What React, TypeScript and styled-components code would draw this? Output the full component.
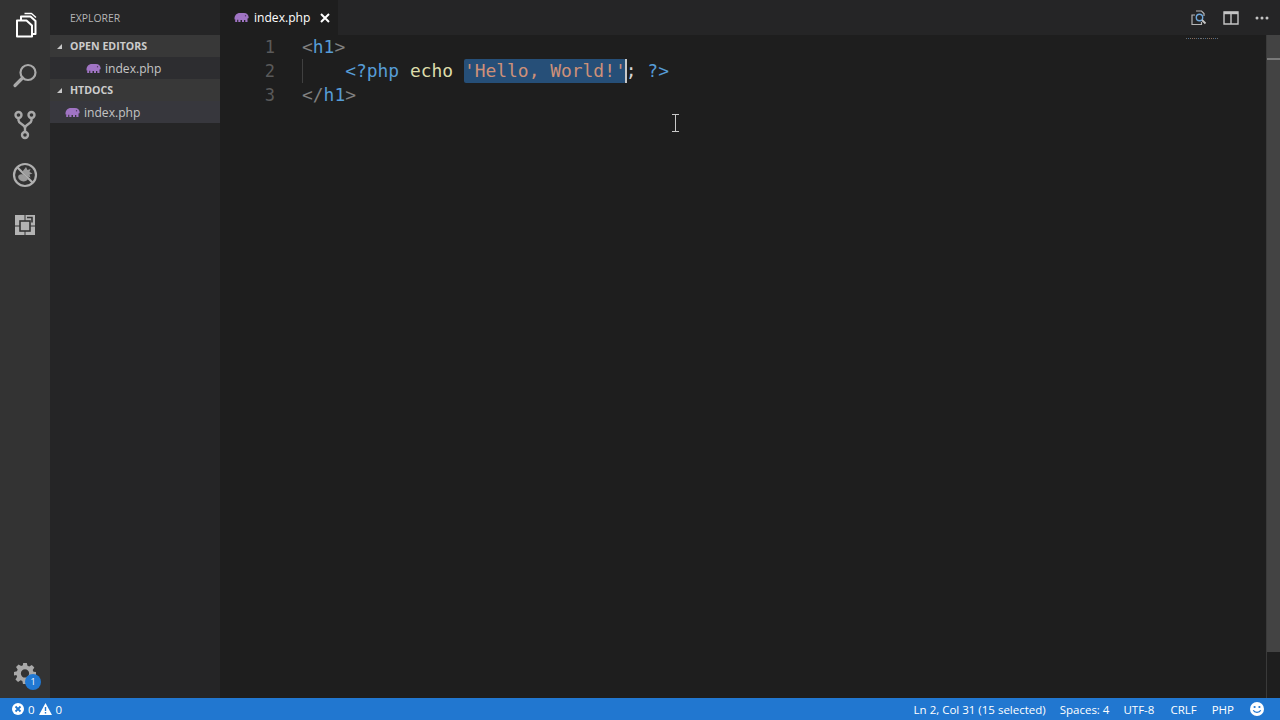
import React from "react";
import styled, { createGlobalStyle } from "styled-components";

const GlobalStyle = createGlobalStyle`
  html, body { margin: 0; padding: 0; background: #1e1e1e; overflow: hidden; }
  * { box-sizing: border-box; }
`;

const Window = styled.div`
  width: 1280px;
  height: 720px;
  display: flex;
  flex-direction: column;
  font-family: "Open Sans", "Noto Sans", sans-serif;
  position: relative;
`;

const Main = styled.div`
  flex: 1;
  display: flex;
  min-height: 0;
`;

const ActivityBar = styled.div`
  width: 50px;
  background: #333333;
  display: flex;
  flex-direction: column;
  align-items: center;
`;

const ActivityItem = styled.div`
  width: 50px;
  height: 50px;
  display: flex;
  align-items: center;
  justify-content: center;
`;

const ActivitySpacer = styled.div`
  flex: 1;
`;

const GearWrap = styled.div`
  width: 50px;
  height: 50px;
  display: flex;
  align-items: center;
  justify-content: center;
  position: relative;
`;

const Badge = styled.div`
  position: absolute;
  left: 25px;
  top: 26px;
  width: 16px;
  height: 16px;
  border-radius: 50%;
  background: #2178d2;
  color: #fff;
  font-size: 9px;
  line-height: 16px;
  text-align: center;
`;

const Sidebar = styled.div`
  width: 170px;
  background: #252526;
  display: flex;
  flex-direction: column;
`;

const SidebarTitle = styled.div`
  height: 35px;
  padding-left: 20px;
  font-size: 10.4px;
  line-height: 37px;
  color: #b5b5b5;
`;

const SectionHeader = styled.div`
  height: 22px;
  background: #383838;
  display: flex;
  align-items: center;
  padding-left: 7px;
  font-size: 10.6px;
  font-weight: 700;
  color: #cccccc;
`;

const Caret = styled.span`
  width: 0;
  height: 0;
  border-style: solid;
  border-width: 0 0 5px 5px;
  border-color: transparent transparent #c8c8c8 transparent;
  margin-right: 8px;
`;

const FileRow = styled.div<{ $indent: number; $active?: boolean }>`
  height: 22px;
  display: flex;
  align-items: center;
  gap: 4px;
  padding-left: ${(p) => p.$indent}px;
  font-size: 12.1px;
  color: #c4c4c4;
  background: ${(p) => (p.$active ? "#37373d" : "#2d2d30")};
`;

const EditorArea = styled.div`
  flex: 1;
  display: flex;
  flex-direction: column;
  min-width: 0;
  background: #1e1e1e;
`;

const TabBar = styled.div`
  height: 35px;
  background: #252526;
  display: flex;
  justify-content: space-between;
  align-items: center;
`;

const Tab = styled.div`
  height: 35px;
  width: 118px;
  background: #1e1e1e;
  display: flex;
  align-items: center;
  padding-left: 14px;
  font-size: 12.1px;
  color: #ffffff;
`;

const TabName = styled.span`
  margin-left: 5px;
`;

const TabClose = styled.span`
  margin-left: 10px;
  display: flex;
`;

const TabActions = styled.div`
  display: flex;
  align-items: center;
  gap: 16px;
  padding-right: 11px;
`;

const EditorBody = styled.div`
  flex: 1;
  display: flex;
  min-height: 0;
  position: relative;
`;

const Gutter = styled.div`
  width: 55px;
  text-align: right;
  color: #5a5a5a;
  font-family: "DejaVu Sans Mono", monospace;
  font-size: 17px;
  line-height: 24px;
`;

const Code = styled.div`
  flex: 1;
  margin-left: 27px;
  font-family: "DejaVu Sans Mono", monospace;
  font-size: 17.93px;
  line-height: 24px;
  white-space: pre;
  color: #d4d4d4;
`;

const CodeLine = styled.div`
  height: 24px;
  position: relative;
`;

const IndentGuide = styled.span`
  position: absolute;
  left: 0;
  top: 0;
  width: 1px;
  height: 24px;
  background: #404040;
`;

const Token = styled.span<{ $color: string }>`
  color: ${(p) => p.$color};
`;

const Selection = styled.span`
  background: #264f78;
  color: #ce9178;
  position: relative;
  display: inline-block;
  height: 24px;
  border-radius: 2px;
`;

const Cursor = styled.span`
  position: absolute;
  right: -1px;
  top: 0;
  width: 2px;
  height: 24px;
  background: #c8c8c8;
`;

const Minimap = styled.div`
  position: absolute;
  left: 966px;
  top: 1px;
  width: 32px;
  height: 4px;
  display: flex;
  gap: 1px;
  align-items: center;
`;

const MinimapDot = styled.span<{ $color: string }>`
  width: 2px;
  height: 1px;
  background: ${(p) => p.$color};
`;

const ScrollTrack = styled.div`
  width: 14px;
  border-left: 1px solid #3a3a3a;
  display: flex;
  flex-direction: column;
`;

const ScrollThumb = styled.div`
  height: 617px;
  background: #434343;
  position: relative;
`;

const ScrollMark = styled.div`
  position: absolute;
  left: 0;
  right: 0;
  top: 23px;
  height: 2px;
  background: #7a7a7a;
`;

const IBeam = styled.svg`
  position: absolute;
  left: 671px;
  top: 114px;
`;

const StatusBar = styled.div`
  height: 22px;
  background: #2177d0;
  display: flex;
  align-items: center;
  justify-content: space-between;
  color: #ffffff;
  font-size: 11.5px;
`;

const StatusGroup = styled.div`
  display: flex;
  align-items: center;
`;

const StatusText = styled.span<{ $gap?: number }>`
  margin-left: ${(p) => p.$gap ?? 0}px;
  display: flex;
`;

const SmileySlot = styled.span`
  display: flex;
  margin-left: 16px;
  margin-right: 16px;
`;

const PhpIcon = () => (
  <svg width="15" height="11" viewBox="0 0 15 11">
    <path
      d="M.5 7.500C.2 3.500 2.500 1 6 1h4c2.800 0 4.700 2 4.700 4.600 0 .8-.7 1-1.200.6V10h-2.200V8H10v2H8V8H6.500v2H4.300V7.800H3.200V10H1.200V7.200C1 7 .7 7.300.5 7.500Z"
      fill="#a074c4"
    />
    <circle cx="11.500" cy="3.800" r=".7" fill="#4f3a63" />
  </svg>
);

const FilesIcon = () => (
  <svg width="24" height="26" viewBox="0 0 24 26" fill="none" stroke="#ffffff" strokeWidth="2" strokeLinejoin="round">
    <path d="M4 8.500h9.500l5.500 5v11H4Z" />
    <path d="M8 8V4.500h9.500l5 4.500v13H19" />
    <path d="M11.500 1.500h7l4.500 4" strokeWidth="1.400" />
  </svg>
);

const SearchIcon = () => (
  <svg width="26" height="26" viewBox="0 0 26 26" fill="none" stroke="#a9a9a9">
    <circle cx="16" cy="10.500" r="7.500" strokeWidth="2.200" />
    <path d="M10.500 16 3 23.500" strokeWidth="3.200" strokeLinecap="round" />
  </svg>
);

const BranchIcon = () => (
  <svg width="22" height="30" viewBox="0 0 22 30" fill="none" stroke="#a9a9a9" strokeWidth="2.400">
    <circle cx="4.500" cy="5" r="3" />
    <circle cx="17.500" cy="5" r="3" />
    <circle cx="11" cy="25" r="3" />
    <path d="M4.500 8v2.500c0 3 6.500 4 6.500 7.500v4M17.500 8v2.500c0 3-6.500 4-6.500 7.500" />
  </svg>
);

const DebugIcon = () => (
  <svg width="26" height="26" viewBox="0 0 26 26" fill="none">
    <circle cx="13" cy="13" r="11" stroke="#b0b0b0" strokeWidth="2.200" />
    <path d="M5 5 21 21" stroke="#b0b0b0" strokeWidth="2.200" />
    <path d="M14 5l1.500 3 3-1-1 3 3 1.500-3 1 1 3-4-1.500-4-4.500Z" fill="#9a9a9a" />
    <path d="M6.500 13.500c2-2 5-1.500 6.500.5l3 3c-1 2-4 3-6.500 2-2.500-1-4-3.500-3-5.500Z" fill="#9a9a9a" />
  </svg>
);

const ExtensionsIcon = () => (
  <svg width="24" height="24" viewBox="0 0 24 24">
    <rect x="2" y="2" width="20" height="20" fill="#b3b3b3" />
    <rect x="7" y="8" width="10" height="10" fill="#b3b3b3" stroke="#333333" strokeWidth="1.600" />
    <path d="M14 4.500h5v5" fill="none" stroke="#333333" strokeWidth="1.600" />
    <path d="M12 2v6M12 18v4M17 13h5M2 13h5" stroke="#333333" strokeWidth="1" />
  </svg>
);

const GearIcon = () => (
  <svg width="22" height="22" viewBox="0 0 24 24">
    <path
      fillRule="evenodd"
      fill="#a9a9a9"
      d="M10 1h4l.7 3.200 1.900.8L19.400 3.200l2.800 2.800-1.800 2.800.8 1.900L24 11v4l-3.200.7-.8 1.900 1.800 2.800-2.800 2.800-2.800-1.800-1.900.8L13.800 24h-4l-.7-3.200-1.900-.8-2.800 1.800-2.800-2.800 1.800-2.800-.8-1.900L0 14.800v-4l3.200-.7.8-1.900L2.200 5.400 5 2.600l2.800 1.800 1.900-.8ZM12 8a4.500 4.500 0 1 0 0 9 4.500 4.500 0 0 0 0-9Z"
    />
  </svg>
);

const CloseIcon = () => (
  <svg width="10" height="10" viewBox="0 0 10 10" stroke="#ffffff" strokeWidth="2">
    <path d="M1 1l8 8M9 1l-8 8" />
  </svg>
);

const CompareIcon = () => (
  <svg width="16" height="16" viewBox="0 0 16 16" fill="none" stroke="#b5b5b5" strokeWidth="1.200">
    <path d="M4 5H1v9.500h9.500V12" />
    <path d="M5 1h5.500L13 3.500V6" />
    <circle cx="8.500" cy="7.500" r="3.200" stroke="#6fa8dc" strokeWidth="1.400" />
    <path d="M11 10l3.500 3.500" stroke="#c5c5c5" strokeWidth="1.800" />
  </svg>
);

const SplitIcon = () => (
  <svg width="16" height="14" viewBox="0 0 16 14" fill="none" stroke="#c5c5c5">
    <path d="M1 1h14v12H1Z" strokeWidth="1.400" />
    <path d="M1 2h14" strokeWidth="2.400" />
    <path d="M8 1v12" strokeWidth="1.400" />
  </svg>
);

const MoreIcon = () => (
  <svg width="14" height="4" viewBox="0 0 14 4" fill="#c5c5c5">
    <circle cx="2" cy="2" r="1.500" />
    <circle cx="7" cy="2" r="1.500" />
    <circle cx="12" cy="2" r="1.500" />
  </svg>
);

const ErrorIcon = () => (
  <svg width="12" height="12" viewBox="0 0 12 12">
    <circle cx="6" cy="6" r="6" fill="#ffffff" />
    <path d="M3.500 3.500l5 5M8.500 3.500l-5 5" stroke="#2177d0" strokeWidth="1.800" />
  </svg>
);

const WarningIcon = () => (
  <svg width="13" height="12" viewBox="0 0 13 12">
    <path d="M6.500 0 13 12H0Z" fill="#ffffff" />
    <path d="M6.500 4v4M6.500 9v1.500" stroke="#2177d0" strokeWidth="1.400" />
  </svg>
);

const SmileyIcon = () => (
  <svg width="14" height="14" viewBox="0 0 14 14">
    <circle cx="7" cy="7" r="7" fill="#ffffff" />
    <circle cx="4.600" cy="5" r="1.100" fill="#2177d0" />
    <circle cx="9.400" cy="5" r="1.100" fill="#2177d0" />
    <path d="M3.300 8.300c1.200 2.800 6.200 2.800 7.400 0" fill="none" stroke="#2177d0" strokeWidth="1.200" />
  </svg>
);

const minimapColors = ["#6b6b6b", "#4b6f94", "#77766a", "#8a6a5c", "#8a6a5c", "#6b6b6b", "#4b6f94", "#6b6b6b"];

export default function App() {
  return (
    <Window>
      <GlobalStyle />
      <Main>
        <ActivityBar>
          <ActivityItem><FilesIcon /></ActivityItem>
          <ActivityItem><SearchIcon /></ActivityItem>
          <ActivityItem><BranchIcon /></ActivityItem>
          <ActivityItem><DebugIcon /></ActivityItem>
          <ActivityItem><ExtensionsIcon /></ActivityItem>
          <ActivitySpacer />
          <GearWrap>
            <GearIcon />
            <Badge>1</Badge>
          </GearWrap>
        </ActivityBar>
        <Sidebar>
          <SidebarTitle>EXPLORER</SidebarTitle>
          <SectionHeader><Caret />OPEN EDITORS</SectionHeader>
          <FileRow $indent={36}><PhpIcon />index.php</FileRow>
          <SectionHeader><Caret />HTDOCS</SectionHeader>
          <FileRow $indent={15} $active><PhpIcon />index.php</FileRow>
        </Sidebar>
        <EditorArea>
          <TabBar>
            <Tab>
              <PhpIcon />
              <TabName>index.php</TabName>
              <TabClose><CloseIcon /></TabClose>
            </Tab>
            <TabActions>
              <CompareIcon />
              <SplitIcon />
              <MoreIcon />
            </TabActions>
          </TabBar>
          <EditorBody>
            <Gutter>
              <div>1</div>
              <div>2</div>
              <div>3</div>
            </Gutter>
            <Code>
              <CodeLine>
                <Token $color="#808080">&lt;</Token>
                <Token $color="#569cd6">h1</Token>
                <Token $color="#808080">&gt;</Token>
              </CodeLine>
              <CodeLine>
                <IndentGuide />
                {"    "}
                <Token $color="#569cd6">&lt;?php</Token>{" "}
                <Token $color="#dcdcaa">echo</Token>{" "}
                <Selection>
                  &apos;Hello, World!&apos;
                  <Cursor />
                </Selection>
                <Token $color="#d4d4d4">;</Token>{" "}
                <Token $color="#569cd6">?&gt;</Token>
              </CodeLine>
              <CodeLine>
                <Token $color="#808080">&lt;/</Token>
                <Token $color="#569cd6">h1</Token>
                <Token $color="#808080">&gt;</Token>
              </CodeLine>
            </Code>
            <Minimap>
              {minimapColors.map((c, i) => (
                <MinimapDot key={i} $color={c} />
              ))}
              {minimapColors.map((c, i) => (
                <MinimapDot key={`b${i}`} $color={c} />
              ))}
            </Minimap>
            <ScrollTrack>
              <ScrollThumb>
                <ScrollMark />
              </ScrollThumb>
            </ScrollTrack>
          </EditorBody>
        </EditorArea>
      </Main>
      <IBeam width="9" height="18" viewBox="0 0 9 18" stroke="#c8c8c8" fill="none">
        <path d="M1 .5h7M4.500.5v17M1 17.500h7" />
      </IBeam>
      <StatusBar>
        <StatusGroup>
          <StatusText $gap={12}><ErrorIcon /></StatusText>
          <StatusText $gap={4}>0</StatusText>
          <StatusText $gap={4}><WarningIcon /></StatusText>
          <StatusText $gap={4}>0</StatusText>
        </StatusGroup>
        <StatusGroup>
          <StatusText>Ln 2, Col 31 (15 selected)</StatusText>
          <StatusText $gap={14}>Spaces: 4</StatusText>
          <StatusText $gap={14}>UTF-8</StatusText>
          <StatusText $gap={16}>CRLF</StatusText>
          <StatusText $gap={15}>PHP</StatusText>
          <SmileySlot><SmileyIcon /></SmileySlot>
        </StatusGroup>
      </StatusBar>
    </Window>
  );
}
